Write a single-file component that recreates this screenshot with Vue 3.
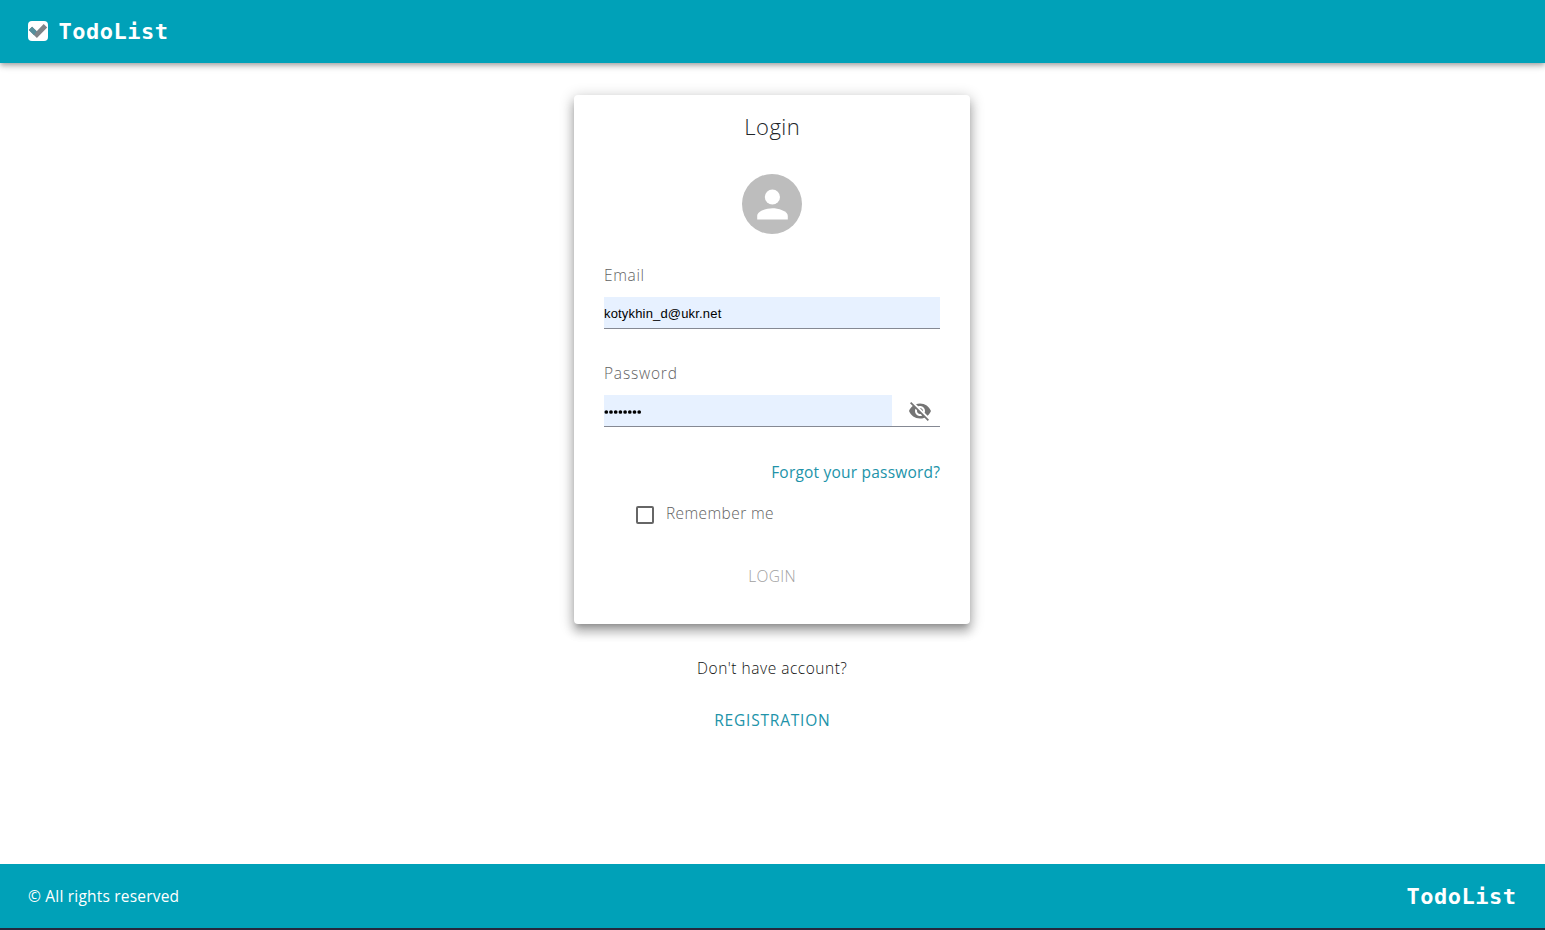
<script setup>
import { ref } from 'vue'

const email = ref('kotykhin_d@ukr.net')
const password = ref('password')
const remember = ref(false)
</script>

<template>
  <div class="page">
    <header class="bar top">
      <svg class="check" viewBox="0 0 20 20">
        <rect width="20" height="20" rx="4" fill="#fff" />
        <path d="M.8 9 4.1 5.7 8.7 10.3 15.7 3 19.2 6.4 8.9 17.1Z" fill="#808488" />
        <path d="M.8 9 4.1 5.7 8.7 10.3 6 14.2Z" fill="#568f9c" />
      </svg>
      <span class="brand">TodoList</span>
    </header>
    <main>
      <form class="card" @submit.prevent>
        <h1><span class="t-title">Login</span></h1>
        <svg class="avatar" viewBox="0 0 60 60">
          <circle cx="30" cy="30" r="30" fill="#bdbdbd" />
          <circle cx="30.4" cy="23" r="7.6" fill="#fff" />
          <path d="M15.2 45.5v-3.6c0-5 10.1-7.6 15.3-7.6s15.3 2.6 15.3 7.6v3.6z" fill="#fff" />
        </svg>
        <label class="label first"><span class="t-email">Email</span></label>
        <div class="field"><input v-model="email" type="text" /></div>
        <label class="label second"><span class="t-pass">Password</span></label>
        <div class="field">
          <div class="secret">
            <svg class="dots" viewBox="0 0 40 4">
              <circle v-for="(c, i) in password" :key="i" :cx="2.3 + i * 4.7" cy="2" r="1.85" />
            </svg>
          </div>
          <svg class="eye" viewBox="0 0 24 24" fill="#757575">
            <path d="M12 7c2.76 0 5 2.24 5 5 0 .65-.13 1.26-.36 1.83l2.92 2.92c1.51-1.26 2.7-2.89 3.43-4.75-1.73-4.39-6-7.5-11-7.5-1.4 0-2.74.25-3.98.7l2.16 2.16C10.74 7.13 11.35 7 12 7zM2 4.27l2.28 2.28.46.46C3.08 8.3 1.78 10.02 1 12c1.73 4.39 6 7.5 11 7.5 1.55 0 3.03-.3 4.38-.84l.42.42L19.73 22 21 20.73 3.27 3 2 4.27zM7.53 9.8l1.55 1.55c-.05.21-.08.43-.08.65 0 1.66 1.34 3 3 3 .22 0 .44-.03.65-.08l1.55 1.55c-.67.33-1.41.53-2.2.53-2.76 0-5-2.24-5-5 0-.79.2-1.53.53-2.2zm4.31-.78l3.15 3.15.02-.16c0-1.66-1.34-3-3-3l-.17.01z" />
          </svg>
        </div>
        <a class="forgot"><span class="t-forgot">Forgot your password?</span></a>
        <label class="remember">
          <input v-model="remember" type="checkbox" />
          <span class="t-remember">Remember me</span>
        </label>
        <button class="login" disabled><span class="t-login">LOGIN</span></button>
      </form>
      <p class="question"><span class="t-question">Don't have account?</span></p>
      <a class="register"><span class="t-register">REGISTRATION</span></a>
    </main>
    <footer class="bar bottom">
      <span class="t-rights">© All rights reserved</span>
      <span class="brand">TodoList</span>
    </footer>
  </div>
</template>

<style>
body { margin: 0; background: #fff; }
</style>

<style scoped>
.page { height: 930px; box-sizing: border-box; border-bottom: 2px solid #25283d; display: flex; flex-direction: column; overflow: hidden; font: 300 15.5px/24px "Open Sans", sans-serif; color: #212529; }
.bar { display: flex; align-items: center; background: #00a1b8; color: #fff; padding: 0 28px; box-sizing: border-box; flex: none; }
.top { height: 63px; padding-bottom: 1px; box-shadow: 0 2px 4px -1px rgba(0,0,0,.2), 0 4px 5px rgba(0,0,0,.14), 0 1px 10px rgba(0,0,0,.12); }
.bottom { height: 64px; justify-content: space-between; padding-right: 28.5px; }
.check { width: 20px; height: 20px; margin-right: 10.5px; }
.brand { font: bold 22px/30px "DejaVu Sans Mono", monospace; letter-spacing: .5px; padding-top: 1px; }
main { flex: 1; display: flex; flex-direction: column; align-items: center; padding-top: 32px; padding-right: 1px; }
.card { width: 396px; height: 529px; box-sizing: border-box; padding: 15px 30px 0; background: #fff; border-radius: 4px; box-shadow: 0 5px 5px -3px rgba(0,0,0,.2), 0 8px 10px 1px rgba(0,0,0,.18), 0 3px 14px 2px rgba(0,0,0,.2); display: flex; flex-direction: column; align-items: stretch; }
h1 { margin: 0; height: 32px; font: 300 22px/32px "Open Sans", sans-serif; text-align: center; }
.t-title { letter-spacing: .5px; margin-right: -.5px; }
.avatar { width: 60px; height: 60px; margin: 32px auto 0; flex: none; }
.label { height: 24px; color: #626262; white-space: nowrap; }
.t-email { letter-spacing: .65px; }
.t-pass { letter-spacing: .8px; }
.first { margin: 29px 0 10px; }
.second { margin: 32px 0 10px; }
.field { height: 32px; border-bottom: 1px solid #858993; box-sizing: border-box; display: flex; align-items: stretch; }
.field input { flex: 1; min-width: 0; border: 0; outline: 0; padding: 1px 0 0; background: #e7f1ff; color: #000; font: 13px "Liberation Sans", sans-serif; letter-spacing: .17px; }
.secret { width: 288px; background: #e7f1ff; display: flex; align-items: center; box-sizing: border-box; padding-top: 2px; }
.dots { width: 40px; height: 4px; overflow: visible; }
.eye { width: 24px; height: 24px; margin: 4px 0 0 16px; }
.forgot { color: #2193a9; text-align: right; margin-top: 33px; font-weight: 400; white-space: nowrap; }
.t-forgot { letter-spacing: .21px; margin-right: -.2px; }
.remember { display: flex; align-items: center; height: 24px; margin: 17px 0 0 32px; color: #626262; }
.remember input { appearance: none; width: 18px; height: 18px; margin: 3px 12px 0 0; border: 2px solid #666; border-radius: 2px; box-sizing: border-box; }
.t-remember { letter-spacing: .4px; }
.login { margin: 39px 0 0; border: 0; padding: 0; height: 24px; background: none; font: inherit; color: #a0a0a0; }
.t-login { letter-spacing: .3px; margin-right: -.3px; }
.question { margin: 32px 0 0; height: 24px; color: #111; }
.t-question { letter-spacing: .52px; margin-right: -.5px; }
.register { margin-top: 28px; color: #2193a9; font-weight: 400; }
.t-register { letter-spacing: .8px; margin-right: -.8px; }
span { white-space: nowrap; }
.t-rights { font-weight: 400; letter-spacing: .2px; }
</style>
